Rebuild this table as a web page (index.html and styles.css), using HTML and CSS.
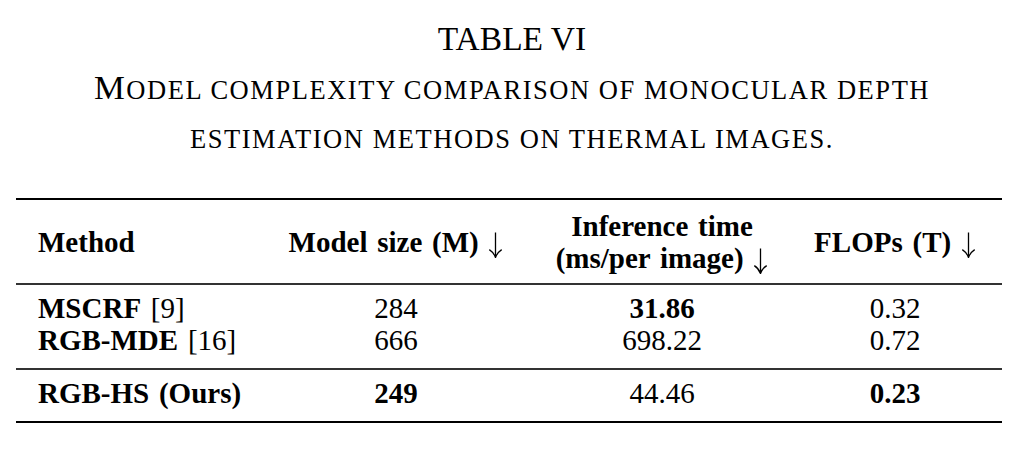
FILE: index.html
```html
<!DOCTYPE html>
<html lang="en">
<head>
<meta charset="utf-8">
<title>Table VI</title>
<link rel="stylesheet" href="styles.css">
</head>
<body>
<div class="title">TABLE VI</div>
<div class="caption">
  <div><span class="cap-big">M</span>odel complexity comparison of monocular depth</div>
  <div>estimation methods on thermal images.</div>
</div>
<table class="tbl">
  <colgroup>
    <col class="c1"><col class="c2"><col class="c3"><col class="c4">
  </colgroup>
  <thead>
    <tr>
      <th class="left">Method</th>
      <th>Model size (M) <svg class="arrow" viewBox="0 0 15 26" width="15" height="26"><path d="M7.5 0.5V25.2M1.3 17.6C4.3 19.5 6.4 22.3 7.5 25.5C8.6 22.3 10.7 19.5 13.7 17.6"/></svg></th>
      <th>Inference time<br>(ms/per image) <svg class="arrow" viewBox="0 0 15 26" width="15" height="26"><path d="M7.5 0.5V25.2M1.3 17.6C4.3 19.5 6.4 22.3 7.5 25.5C8.6 22.3 10.7 19.5 13.7 17.6"/></svg></th>
      <th>FLOPs (T) <svg class="arrow" viewBox="0 0 15 26" width="15" height="26"><path d="M7.5 0.5V25.2M1.3 17.6C4.3 19.5 6.4 22.3 7.5 25.5C8.6 22.3 10.7 19.5 13.7 17.6"/></svg></th>
    </tr>
  </thead>
  <tbody class="others">
    <tr class="first">
      <td class="left"><b>MSCRF</b> [9]</td>
      <td>284</td>
      <td><b>31.86</b></td>
      <td>0.32</td>
    </tr>
    <tr class="last">
      <td class="left"><b>RGB-MDE</b> [16]</td>
      <td>666</td>
      <td>698.22</td>
      <td>0.72</td>
    </tr>
  </tbody>
  <tbody class="ours">
    <tr>
      <td class="left"><b>RGB-HS (Ours)</b></td>
      <td><b>249</b></td>
      <td>44.46</td>
      <td><b>0.23</b></td>
    </tr>
  </tbody>
</table>
</body>
</html>
```
FILE: styles.css
```css
html, body {
  margin: 0;
  padding: 0;
  background: #fff;
}
body {
  padding-top: 15px;
  font-family: "Liberation Serif", "Times New Roman", serif;
  color: #000;
}
.title {
  text-align: center;
  font-size: 33.5px;
  line-height: 48px;
}
.caption {
  margin-top: 3px;
  text-align: center;
  font-size: 26.5px;
  line-height: 49px;
  letter-spacing: 1.55px;
  text-transform: uppercase;
}
.cap-big {
  font-size: 34.7px;
  line-height: 0;
}
.tbl {
  margin-top: 34px;
  margin-left: 16px;
  width: 986px;
  table-layout: fixed;
  border-collapse: separate;
  border-spacing: 0;
  font-size: 29px;
  line-height: 32px;
  word-spacing: 2.5px;
}
.c1 { width: 240px; }
.c2 { width: 280px; }
.c3 { width: 252px; }
.c4 { width: 214px; }
.tbl th,
.tbl td {
  padding: 0;
  text-align: center;
  white-space: nowrap;
}
.tbl th.left,
.tbl td.left {
  text-align: left;
  padding-left: 22px;
}
.tbl th {
  height: 83px;
  vertical-align: middle;
  font-weight: bold;
  border-top: 2px solid #000;
  border-bottom: 2px solid #333;
}
.tbl td {
  font-weight: normal;
}
.tbl td b {
  font-weight: bold;
}
.others .first td {
  padding-top: 7px;
}
.others .last td {
  padding-bottom: 12px;
  border-bottom: 2px solid #333;
}
.ours td {
  padding-top: 7px;
  padding-bottom: 12px;
  border-bottom: 2px solid #000;
}
.arrow {
  vertical-align: -6px;
  fill: none;
  stroke: #000;
  stroke-width: 1.3;
}
```
